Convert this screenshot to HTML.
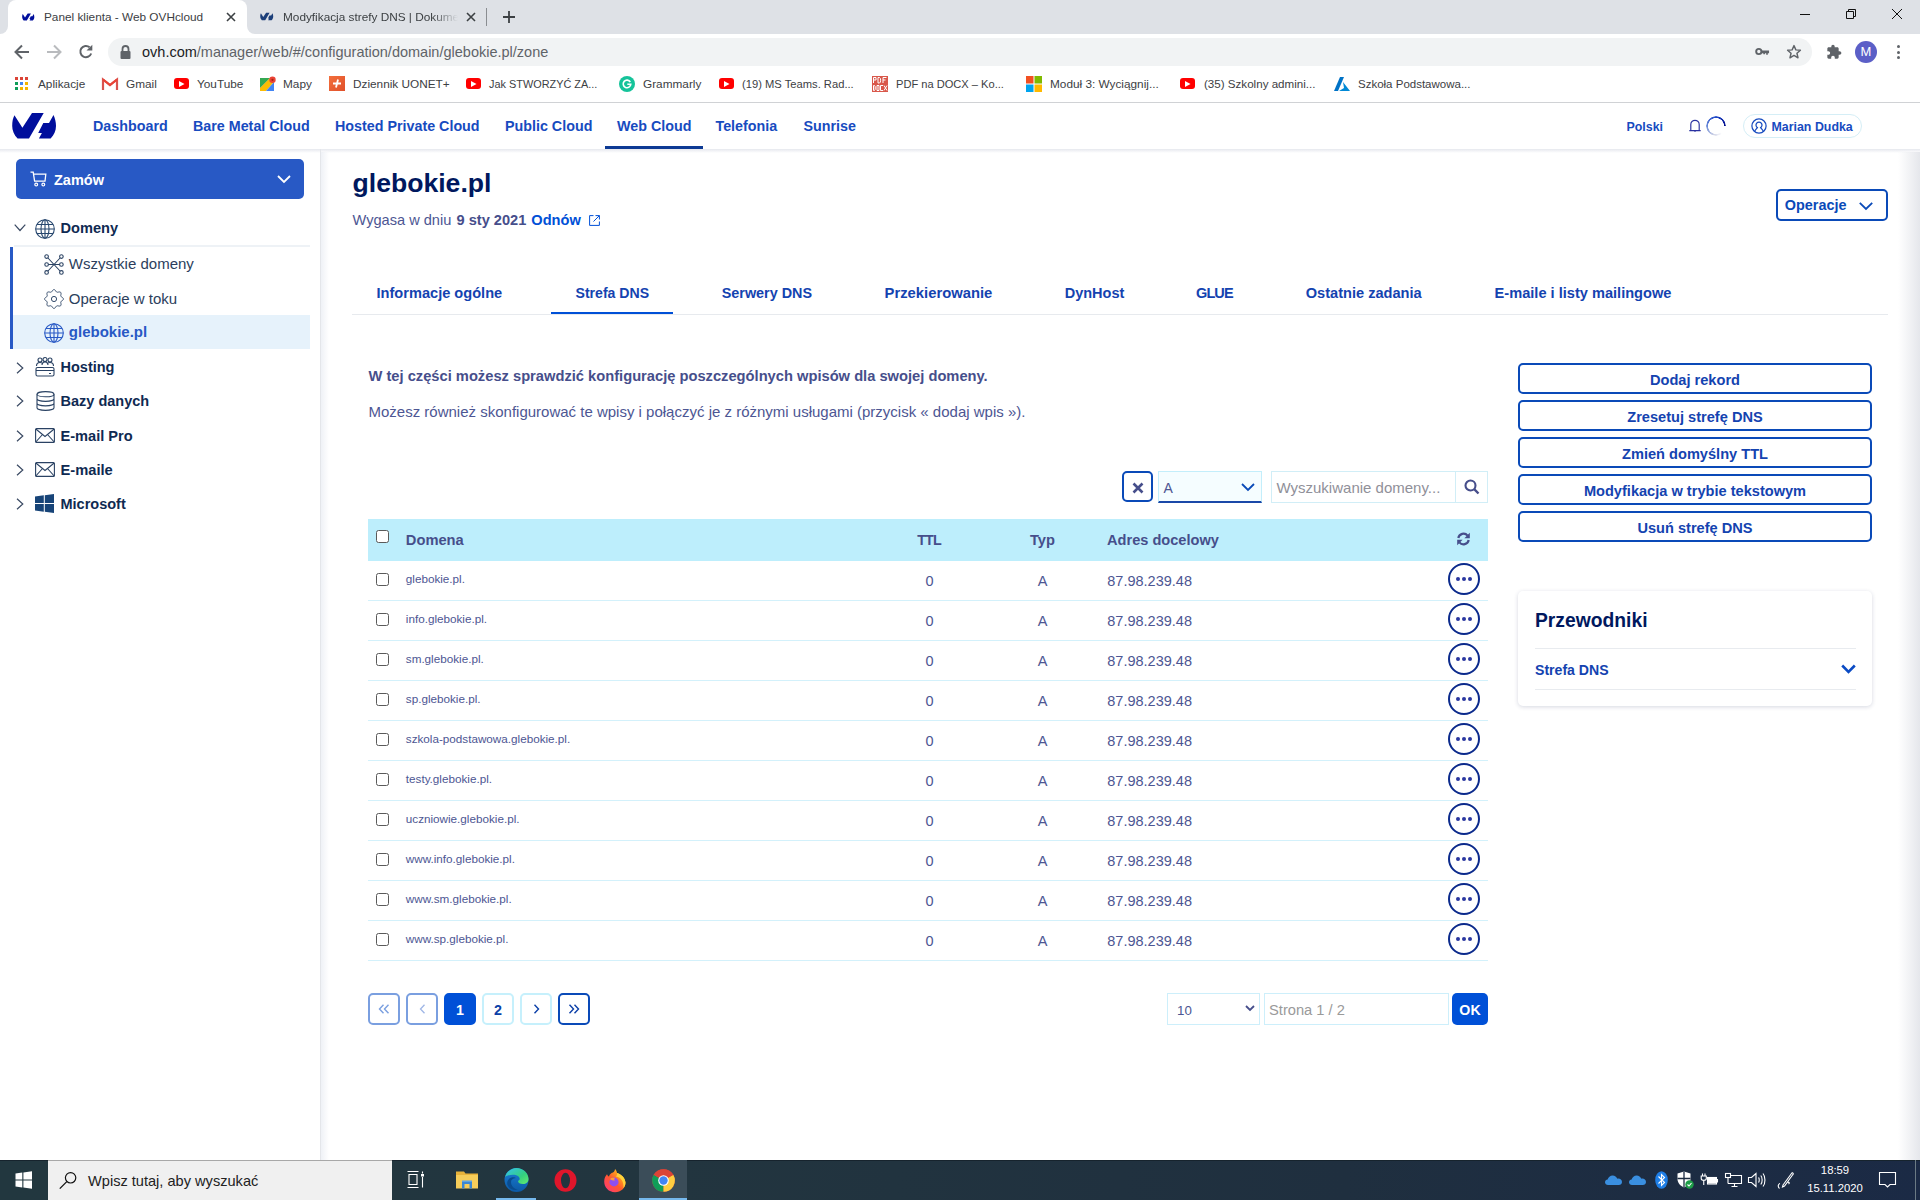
<!DOCTYPE html>
<html><head><meta charset="utf-8">
<style>
*{box-sizing:border-box;margin:0;padding:0}
html,body{width:1920px;height:1200px;overflow:hidden;background:#fff;font-family:"Liberation Sans",sans-serif}
.a{position:absolute}
.t{position:absolute;white-space:nowrap;line-height:20px}
.b{font-weight:bold}
svg{position:absolute;overflow:visible}
</style></head><body>
<!-- ============ BROWSER CHROME ============ -->
<div class="a" style="left:0;top:0;width:1920px;height:34px;background:#dee1e6"></div>
<!-- active tab -->
<div class="a" style="left:8px;top:0;width:239px;height:36px;background:#fff;border-radius:8px 8px 0 0"></div>
<div class="a" style="left:0;top:26px;width:8px;height:8px;background:#fff"></div>
<div class="a" style="left:0;top:26px;width:8px;height:8px;background:#dee1e6;border-bottom-right-radius:8px"></div>
<div class="a" style="left:247px;top:26px;width:8px;height:8px;background:#fff"></div>
<div class="a" style="left:247px;top:26px;width:8px;height:8px;background:#dee1e6;border-bottom-left-radius:8px"></div>
<svg style="left:21px;top:12px" width="15" height="10" viewBox="0 0 54 36"><path fill="#000e9c" d="M6.45,7.2 L14.4,19.8 L24,5.1 L35.7,5.1 L21,30.6 L9.6,30.6 C6,27 4.2,22 4.2,18 C4.2,13 5,10 6.45,7.2Z M45.5,7 C47,10 48,14 48,18 C48,23 46,27 42.6,30.6 L30.9,30.6 L33.9,25 L30.2,25 L35.3,15 L41,15Z"/></svg>
<div class="t" style="left:44px;top:7px;font-size:11.8px;color:#3c4043">Panel klienta - Web OVHcloud</div>
<svg style="left:226px;top:12px" width="10" height="10" viewBox="0 0 10 10"><path d="M1,1L9,9M9,1L1,9" stroke="#3c4043" stroke-width="1.6"/></svg>
<!-- inactive tab -->
<svg style="left:259px;top:11px" width="16" height="11" viewBox="0 0 54 36"><path fill="#1c3f7a" d="M6.45,7.2 L14.4,19.8 L24,5.1 L35.7,5.1 L21,30.6 L9.6,30.6 C6,27 4.2,22 4.2,18 C4.2,13 5,10 6.45,7.2Z M45.5,7 C47,10 48,14 48,18 C48,23 46,27 42.6,30.6 L30.9,30.6 L33.9,25 L30.2,25 L35.3,15 L41,15Z"/></svg>
<div class="t" style="left:283px;top:7px;font-size:11.8px;color:#3c4043;width:175px;overflow:hidden;-webkit-mask-image:linear-gradient(90deg,#000 85%,transparent)">Modyfikacja strefy DNS | Dokumentacja</div>
<svg style="left:466px;top:12px" width="10" height="10" viewBox="0 0 10 10"><path d="M1,1L9,9M9,1L1,9" stroke="#3c4043" stroke-width="1.6"/></svg>
<div class="a" style="left:486px;top:8px;width:1px;height:18px;background:#8a8d91"></div>
<svg style="left:502px;top:10px" width="14" height="14" viewBox="0 0 14 14"><path d="M7,1V13M1,7H13" stroke="#3c4043" stroke-width="1.8"/></svg>
<!-- window controls -->
<div class="a" style="left:1800px;top:14px;width:10px;height:1px;background:#111"></div>
<svg style="left:1846px;top:9px" width="10" height="10" viewBox="0 0 10 10"><path d="M0.5,2.5H7.5V9.5H0.5Z M2.5,2.5V0.5H9.5V7.5H7.5" fill="none" stroke="#111" stroke-width="1"/></svg>
<svg style="left:1892px;top:9px" width="10" height="10" viewBox="0 0 10 10"><path d="M0,0L10,10M10,0L0,10" stroke="#111" stroke-width="1"/></svg>
<!-- toolbar -->
<svg style="left:14px;top:44px" width="16" height="16" viewBox="0 0 16 16"><path d="M15,8H2M8,1.5L1.5,8L8,14.5" fill="none" stroke="#5f6368" stroke-width="2"/></svg>
<svg style="left:46px;top:44px" width="16" height="16" viewBox="0 0 16 16"><path d="M1,8H14M8,1.5L14.5,8L8,14.5" fill="none" stroke="#b9bbbe" stroke-width="2"/></svg>
<svg style="left:78px;top:44px" width="16" height="16" viewBox="0 0 16 16"><path d="M13.2,9.5A5.6,5.6 0 1 1 11.6,3.3" fill="none" stroke="#5f6368" stroke-width="2"/><path d="M14.3,0.8V6.6H8.5Z" fill="#5f6368"/></svg>
<div class="a" style="left:108px;top:38px;width:1704px;height:28px;background:#f1f3f4;border-radius:14px"></div>
<svg style="left:120px;top:45px" width="11" height="14" viewBox="0 0 11 14"><path d="M2.5,6V4A3,3 0 0 1 8.5,4V6" fill="none" stroke="#5f6368" stroke-width="1.8"/><rect x="0.5" y="6" width="10" height="8" rx="1" fill="#5f6368"/></svg>
<div class="t" style="left:142px;top:42px;font-size:14.5px;color:#5f6368"><span style="color:#202124">ovh.com</span>/manager/web/#/configuration/domain/glebokie.pl/zone</div>
<svg style="left:1755px;top:47px" width="15" height="9" viewBox="0 0 18 11"><circle cx="4.5" cy="5.5" r="3.2" fill="none" stroke="#5f6368" stroke-width="2.4"/><path d="M7.5,4.3H17V7.5H15.5V9.5H13.5V7.5H12V9H10V7.5H7.5Z" fill="#5f6368"/></svg>
<svg style="left:1786px;top:44px" width="16" height="16" viewBox="0 0 18 18"><path d="M9,1.8L11.1,6.6L16.2,7L12.3,10.4L13.5,15.5L9,12.8L4.5,15.5L5.7,10.4L1.8,7L6.9,6.6Z" fill="none" stroke="#5f6368" stroke-width="1.6" stroke-linejoin="round"/></svg>
<svg style="left:1826px;top:44px" width="16" height="16" viewBox="0 0 24 24"><path d="M20.5 11H19V7c0-1.1-.9-2-2-2h-4V3.5C13 2.12 11.88 1 10.5 1S8 2.12 8 3.5V5H4c-1.1 0-1.99.9-1.99 2v3.8H3.5c1.490 0 2.7 1.21 2.7 2.7s-1.21 2.7-2.7 2.7H2V20c0 1.1.9 2 2 2h3.8v-1.5c0-1.49 1.21-2.7 2.7-2.7 1.49 0 2.7 1.21 2.7 2.7V22H17c1.1 0 2-.9 2-2v-4h1.5c1.38 0 2.5-1.120 2.5-2.5S21.88 11 20.5 11z" fill="#5f6368"/></svg>
<div class="a" style="left:1855px;top:41px;width:22px;height:22px;border-radius:50%;background:#5b5fc7;color:#fff;font-size:13px;line-height:22px;text-align:center">M</div>
<div class="a" style="left:1896.5px;top:45px;width:3px;height:3px;border-radius:50%;background:#5f6368"></div>
<div class="a" style="left:1896.5px;top:50.5px;width:3px;height:3px;border-radius:50%;background:#5f6368"></div>
<div class="a" style="left:1896.5px;top:56px;width:3px;height:3px;border-radius:50%;background:#5f6368"></div>
<!-- bookmarks -->
<!-- apps grid -->
<svg style="left:15px;top:77px" width="13" height="13" viewBox="0 0 13 13">
<rect x="0" y="0" width="3" height="3" fill="#db4437"/><rect x="5" y="0" width="3" height="3" fill="#db4437"/><rect x="10" y="0" width="3" height="3" fill="#db4437"/>
<rect x="0" y="5" width="3" height="3" fill="#0f9d58"/><rect x="5" y="5" width="3" height="3" fill="#4285f4"/><rect x="10" y="5" width="3" height="3" fill="#f4b400"/>
<rect x="0" y="10" width="3" height="3" fill="#0f9d58"/><rect x="5" y="10" width="3" height="3" fill="#f4b400"/><rect x="10" y="10" width="3" height="3" fill="#f4b400"/></svg>
<div class="t" style="left:38px;top:74px;font-size:11.8px;color:#3c4043">Aplikacje</div>
<!-- gmail -->
<svg style="left:102px;top:78px" width="16" height="12" viewBox="0 0 16 12"><path d="M1,12V1.5L8,7L15,1.5V12" fill="none" stroke="#d9534f" stroke-width="2.2"/><path d="M1,1.5L8,7L15,1.5" fill="none" stroke="#ea4335" stroke-width="2"/></svg>
<div class="t" style="left:126px;top:74px;font-size:11.8px;color:#3c4043">Gmail</div>
<!-- youtube -->
<div class="a" style="left:174px;top:78px;width:15px;height:11px;background:#f00;border-radius:3px"></div>
<svg style="left:179px;top:80.5px" width="6" height="6" viewBox="0 0 6 6"><path d="M0,0L5.5,3L0,6Z" fill="#fff"/></svg>
<div class="t" style="left:197px;top:74px;font-size:11.8px;color:#3c4043">YouTube</div>
<!-- maps -->
<svg style="left:260px;top:76px" width="16" height="15" viewBox="0 0 16 15"><path d="M0,2L10,2L0,12Z" fill="#1a73e8"/><path d="M0,2H10L0,12Z" fill="#34a853"/><path d="M0,12L10,2L14,6L6,15H0Z" fill="#fbbc04"/><path d="M6,15L14,6V15Z" fill="#4285f4"/><circle cx="12.5" cy="3.8" r="3.2" fill="#ea4335"/><circle cx="12.5" cy="3.8" r="1.1" fill="#a52714"/></svg>
<div class="t" style="left:283px;top:74px;font-size:11.8px;color:#3c4043">Mapy</div>
<!-- dziennik -->
<div class="a" style="left:329px;top:76px;width:16px;height:15px;background:linear-gradient(135deg,#f36f3c,#e0502a)"></div>
<svg style="left:331px;top:78px" width="12" height="11" viewBox="0 0 12 11"><path d="M2,5.5H10M7,1.5L5,9.5" stroke="#fff" stroke-width="1.8"/></svg>
<div class="t" style="left:353px;top:74px;font-size:11.8px;color:#3c4043">Dziennik UONET+</div>
<!-- youtube 2 -->
<div class="a" style="left:466px;top:78px;width:15px;height:11px;background:#f00;border-radius:3px"></div>
<svg style="left:471px;top:80.5px" width="6" height="6" viewBox="0 0 6 6"><path d="M0,0L5.5,3L0,6Z" fill="#fff"/></svg>
<div class="t" style="left:489px;top:74px;font-size:10.9px;color:#3c4043">Jak STWORZYĆ ZA...</div>
<!-- grammarly -->
<div class="a" style="left:619px;top:76px;width:16px;height:16px;border-radius:50%;background:#15c39a"></div>
<svg style="left:622px;top:79px" width="10" height="10" viewBox="0 0 10 10"><path d="M8.3,3A3.8,3.8 0 1 0 8.8,5.2H5.3" fill="none" stroke="#fff" stroke-width="1.6"/></svg>
<div class="t" style="left:643px;top:74px;font-size:11.8px;color:#3c4043">Grammarly</div>
<!-- youtube 3 -->
<div class="a" style="left:719px;top:78px;width:15px;height:11px;background:#f00;border-radius:3px"></div>
<svg style="left:724px;top:80.5px" width="6" height="6" viewBox="0 0 6 6"><path d="M0,0L5.5,3L0,6Z" fill="#fff"/></svg>
<div class="t" style="left:742px;top:74px;font-size:11.2px;color:#3c4043">(19) MS Teams. Rad...</div>
<!-- pdf -->
<svg style="left:872px;top:76px" width="16" height="16" viewBox="0 0 16 16"><rect width="16" height="16" fill="#d9574a"/><g fill="none" stroke="#fff" stroke-width="1"><path d="M1.5,7V1.5H4V4H1.5M6,1.5H7.5C9,1.5 9,7 7.5,7H6ZM11,7V1.5H14.5M11,4H13.5"/><path d="M1.5,9.5H2.5C3.5,9.5 3.5,14.5 2.5,14.5H1.5Z M5,9.5H7V14.5H5Z M11,9.5H8.5V14.5H11 M12,9.5L15,14.5M15,9.5L12,14.5"/></g></svg>
<div class="t" style="left:896px;top:74px;font-size:11.1px;color:#3c4043">PDF na DOCX – Ko...</div>
<!-- microsoft -->
<svg style="left:1026px;top:76px" width="16" height="16" viewBox="0 0 16 16"><rect x="0" y="0" width="7.5" height="7.5" fill="#f25022"/><rect x="8.5" y="0" width="7.5" height="7.5" fill="#7fba00"/><rect x="0" y="8.5" width="7.5" height="7.5" fill="#00a4ef"/><rect x="8.5" y="8.5" width="7.5" height="7.5" fill="#ffb900"/></svg>
<div class="t" style="left:1050px;top:74px;font-size:11.8px;color:#3c4043">Moduł 3: Wyciągnij...</div>
<!-- youtube 4 -->
<div class="a" style="left:1180px;top:78px;width:15px;height:11px;background:#f00;border-radius:3px"></div>
<svg style="left:1185px;top:80.5px" width="6" height="6" viewBox="0 0 6 6"><path d="M0,0L5.5,3L0,6Z" fill="#fff"/></svg>
<div class="t" style="left:1204px;top:74px;font-size:11.6px;color:#3c4043">(35) Szkolny admini...</div>
<!-- azure -->
<svg style="left:1334px;top:77px" width="16" height="14" viewBox="0 0 16 14"><path d="M6,0H10L4,14H0Z" fill="#0072c6"/><path d="M9,5L16,14H5L10,11Z" fill="#0089d6"/></svg>
<div class="t" style="left:1358px;top:74px;font-size:11.5px;color:#3c4043">Szkoła Podstawowa...</div>

<div class="a" style="left:0;top:102px;width:1920px;height:1px;background:#d0d2d5"></div>

<!-- ============ OVH HEADER ============ -->
<div class="a" style="left:0;top:103px;width:1920px;height:46px;background:#fff"></div>
<div class="a" style="left:0;top:149px;width:1920px;height:4px;background:linear-gradient(#e6e8ee,rgba(240,242,246,0))"></div>
<svg style="left:8px;top:108px" width="54" height="36" viewBox="0 0 54 36"><path fill="#000e9c" d="M6.45,7.2 L14.4,19.8 L24,5.1 L35.7,5.1 L21,30.6 L9.6,30.6 C6,27 4.2,22 4.2,18 C4.2,13 5,10 6.45,7.2Z M45.5,7 C47,10 48,14 48,18 C48,23 46,27 42.6,30.6 L30.9,30.6 L33.9,25 L30.2,25 L35.3,15 L41,15Z"/></svg>
<div class="t b" style="left:93px;top:115.8px;font-size:14.3px;color:#174bbf">Dashboard</div>
<div class="t b" style="left:193px;top:115.8px;font-size:14.3px;color:#174bbf">Bare Metal Cloud</div>
<div class="t b" style="left:335px;top:115.8px;font-size:14.3px;color:#174bbf">Hosted Private Cloud</div>
<div class="t b" style="left:505px;top:115.8px;font-size:14.3px;color:#174bbf">Public Cloud</div>
<div class="t b" style="left:617px;top:115.8px;font-size:14.3px;color:#174bbf">Web Cloud</div>
<div class="a" style="left:605px;top:146px;width:98px;height:3px;background:#0d3a94"></div>
<div class="t b" style="left:715.5px;top:115.8px;font-size:14.3px;color:#174bbf">Telefonia</div>
<div class="t b" style="left:803.5px;top:115.8px;font-size:14.3px;color:#174bbf">Sunrise</div>
<div class="t b" style="left:1626.5px;top:116.7px;font-size:12.4px;color:#174bbf">Polski</div>
<svg style="left:1689px;top:119px" width="12" height="13" viewBox="0 0 12 13"><path d="M1.8,11.2V5.5A4.2,4.2 0 0 1 10.2,5.5V11.2M0.3,11.6H11.7" fill="none" stroke="#2a31a0" stroke-width="1.15"/><rect x="5.2" y="11.6" width="1.6" height="1" fill="#2a31a0"/></svg>
<div class="a" style="left:1706.2px;top:115.7px;width:20px;height:20px;border-radius:50%;background:conic-gradient(#1f48c8 0deg,#000a8a 90deg,rgba(255,255,255,0) 92deg,rgba(255,255,255,0) 140deg,rgba(170,176,210,0.55) 195deg,#6a8ad8 270deg,#1f48c8 360deg);-webkit-mask:radial-gradient(circle,transparent 7.8px,#000 8.1px,#000 9.8px,transparent 10.1px)"></div>
<div class="a" style="left:1743px;top:114px;width:119px;height:24px;border:1px solid #d5eef6;border-radius:12px"></div>
<svg style="left:1751px;top:118px" width="16" height="16" viewBox="0 0 16 16" fill="none" stroke="#174bbf" stroke-width="1.25"><circle cx="8" cy="8" r="7.1"/><path d="M3.6,13.4C4.3,11.8 5.6,10.8 6.4,9.6A3,3 0 1 1 9.6,9.6C10.4,10.8 11.7,11.8 12.4,13.4"/></svg>
<div class="t b" style="left:1771.5px;top:116.7px;font-size:12.4px;color:#174bbf">Marian Dudka</div>


<!-- ============ SIDEBAR ============ -->
<div class="a" style="left:320px;top:149px;width:1px;height:1011px;background:#e4e6ea"></div>
<div class="a" style="left:321px;top:152px;width:8px;height:1008px;background:linear-gradient(90deg,rgba(235,238,244,0.8),rgba(255,255,255,0))"></div>
<!-- Zamow -->
<div class="a" style="left:16px;top:159px;width:288px;height:40px;background:#2859c5;border-radius:5px"></div>
<svg style="left:30px;top:171px" width="17" height="16" viewBox="0 0 17 16"><path d="M0.5,1.2H3.2L4.6,10.2H15L15.8,3.2H3.6" fill="none" stroke="#fff" stroke-width="1.3"/><circle cx="6.2" cy="13.6" r="1.4" fill="none" stroke="#fff" stroke-width="1.2"/><circle cx="13.3" cy="13.6" r="1.4" fill="none" stroke="#fff" stroke-width="1.2"/></svg>
<div class="t b" style="left:54px;top:170px;font-size:14.5px;color:#fff">Zamów</div>
<svg style="left:277px;top:174.5px" width="14" height="9" viewBox="0 0 14 9"><path d="M1,1L7,7L13,1" fill="none" stroke="#fff" stroke-width="1.8"/></svg>
<!-- Domeny -->
<svg style="left:14px;top:224px" width="12" height="8" viewBox="0 0 12 8"><path d="M0.7,0.7L6,6.5L11.3,0.7" fill="none" stroke="#3a4a63" stroke-width="1.2"/></svg>
<svg style="left:35px;top:218.5px" width="20" height="20" viewBox="0 0 20 20" fill="none" stroke="#27476e" stroke-width="1.1"><circle cx="10" cy="10" r="9.3"/><ellipse cx="10" cy="10" rx="4" ry="9.3"/><path d="M10,0.7V19.3M0.7,10H19.3M2,5.5H18M2,14.5H18"/></svg>
<div class="t b" style="left:60.5px;top:218px;font-size:14.6px;color:#0f2a52">Domeny</div>
<div class="a" style="left:14px;top:245px;width:296px;height:2px;background:#eef2f6"></div>
<div class="a" style="left:10px;top:247px;width:3px;height:102px;background:#2859c5"></div>
<!-- Wszystkie domeny -->
<svg style="left:44px;top:254px" width="20" height="21" viewBox="0 0 20 21" fill="none" stroke="#2a4263" stroke-width="1.1"><path d="M3.5,3.5L16.5,17.5M16.5,3.5L3.5,17.5M3.5,10.5H16.5" /><circle cx="2.6" cy="2.6" r="1.8" fill="#fff"/><circle cx="17.4" cy="2.6" r="1.8" fill="#fff"/><circle cx="2.6" cy="10.5" r="1.8" fill="#fff"/><circle cx="17.4" cy="10.5" r="1.8" fill="#fff"/><circle cx="2.6" cy="18.4" r="1.8" fill="#fff"/><circle cx="17.4" cy="18.4" r="1.8" fill="#fff"/></svg>
<div class="t" style="left:68.8px;top:254px;font-size:15px;color:#2c3e5c">Wszystkie domeny</div>
<!-- Operacje w toku -->
<svg style="left:44px;top:289px" width="20" height="20" viewBox="0 0 20 20" fill="none" stroke="#2a4263" stroke-width="0.95"><path d="M10.00,0.60 L10.37,0.66 L10.72,0.82 L11.06,1.07 L11.36,1.40 L11.64,1.76 L11.89,2.13 L12.12,2.48 L12.35,2.78 L12.58,3.01 L12.83,3.16 L13.12,3.24 L13.45,3.24 L13.82,3.18 L14.23,3.10 L14.67,3.02 L15.12,2.95 L15.56,2.94 L15.98,3.00 L16.35,3.13 L16.65,3.35 L16.87,3.65 L17.00,4.02 L17.06,4.44 L17.05,4.88 L16.98,5.33 L16.90,5.77 L16.82,6.18 L16.76,6.55 L16.76,6.88 L16.84,7.17 L16.99,7.42 L17.22,7.65 L17.52,7.88 L17.87,8.11 L18.24,8.36 L18.60,8.64 L18.93,8.94 L19.18,9.28 L19.34,9.63 L19.40,10.00 L19.34,10.37 L19.18,10.72 L18.93,11.06 L18.60,11.36 L18.24,11.64 L17.87,11.89 L17.52,12.12 L17.22,12.35 L16.99,12.58 L16.84,12.83 L16.76,13.12 L16.76,13.45 L16.82,13.82 L16.90,14.23 L16.98,14.67 L17.05,15.12 L17.06,15.56 L17.00,15.98 L16.87,16.35 L16.65,16.65 L16.35,16.87 L15.98,17.00 L15.56,17.06 L15.12,17.05 L14.67,16.98 L14.23,16.90 L13.82,16.82 L13.45,16.76 L13.12,16.76 L12.83,16.84 L12.58,16.99 L12.35,17.22 L12.12,17.52 L11.89,17.87 L11.64,18.24 L11.36,18.60 L11.06,18.93 L10.72,19.18 L10.37,19.34 L10.00,19.40 L9.63,19.34 L9.28,19.18 L8.94,18.93 L8.64,18.60 L8.36,18.24 L8.11,17.87 L7.88,17.52 L7.65,17.22 L7.42,16.99 L7.17,16.84 L6.88,16.76 L6.55,16.76 L6.18,16.82 L5.77,16.90 L5.33,16.98 L4.88,17.05 L4.44,17.06 L4.02,17.00 L3.65,16.87 L3.35,16.65 L3.13,16.35 L3.00,15.98 L2.94,15.56 L2.95,15.12 L3.02,14.67 L3.10,14.23 L3.18,13.82 L3.24,13.45 L3.24,13.12 L3.16,12.83 L3.01,12.58 L2.78,12.35 L2.48,12.12 L2.13,11.89 L1.76,11.64 L1.40,11.36 L1.07,11.06 L0.82,10.72 L0.66,10.37 L0.60,10.00 L0.66,9.63 L0.82,9.28 L1.07,8.94 L1.40,8.64 L1.76,8.36 L2.13,8.11 L2.48,7.88 L2.78,7.65 L3.01,7.42 L3.16,7.17 L3.24,6.88 L3.24,6.55 L3.18,6.18 L3.10,5.77 L3.02,5.33 L2.95,4.88 L2.94,4.44 L3.00,4.02 L3.13,3.65 L3.35,3.35 L3.65,3.13 L4.02,3.00 L4.44,2.94 L4.88,2.95 L5.33,3.02 L5.77,3.10 L6.18,3.18 L6.55,3.24 L6.88,3.24 L7.17,3.16 L7.42,3.01 L7.65,2.78 L7.88,2.48 L8.11,2.13 L8.36,1.76 L8.64,1.40 L8.94,1.07 L9.28,0.82 L9.63,0.66Z" stroke-linejoin="round"/><circle cx="10" cy="10" r="2.6"/></svg>
<div class="t" style="left:68.8px;top:288.5px;font-size:15px;color:#2c3e5c">Operacje w toku</div>
<!-- glebokie.pl -->
<div class="a" style="left:13px;top:315px;width:297px;height:34px;background:#e6f2fb"></div>
<svg style="left:44px;top:323px" width="20" height="20" viewBox="0 0 20 20" fill="none" stroke="#2859c5" stroke-width="1.1"><circle cx="10" cy="10" r="9.3"/><ellipse cx="10" cy="10" rx="4" ry="9.3"/><path d="M10,0.7V19.3M0.7,10H19.3M2,5.5H18M2,14.5H18"/></svg>
<div class="t b" style="left:68.8px;top:322px;font-size:15px;color:#2859c5">glebokie.pl</div>
<!-- Hosting -->
<svg style="left:16px;top:362px" width="8" height="12" viewBox="0 0 8 12"><path d="M1,0.7L6.8,6L1,11.3" fill="none" stroke="#3a4a63" stroke-width="1.2"/></svg>
<svg style="left:35px;top:357px" width="20" height="20" viewBox="0 0 20 20" fill="none" stroke="#2a4263" stroke-width="1.1"><circle cx="5" cy="3" r="2"/><circle cx="10" cy="2.5" r="2"/><circle cx="15" cy="3" r="2"/><path d="M1.5,9C1.5,6.5 3,5.5 5,5.5C6.5,5.5 7.5,6 8,7M12,7C12.5,6 13.5,5.5 15,5.5C17,5.5 18.5,6.5 18.5,9M7,8C7,6 8.5,5 10,5C11.5,5 13,6 13,8"/><rect x="1" y="10.5" width="18" height="8.5" rx="1.5"/><path d="M1,13.5H19M14,16.5H16"/></svg>
<div class="t b" style="left:60.5px;top:357px;font-size:14.5px;color:#0f2a52">Hosting</div>
<!-- Bazy danych -->
<svg style="left:16px;top:395px" width="8" height="12" viewBox="0 0 8 12"><path d="M1,0.7L6.8,6L1,11.3" fill="none" stroke="#3a4a63" stroke-width="1.2"/></svg>
<svg style="left:36px;top:391px" width="19" height="20" viewBox="0 0 19 20" fill="none" stroke="#2a4263" stroke-width="1.1"><ellipse cx="9.5" cy="3.2" rx="8.5" ry="2.6"/><path d="M1,3.2V16.8C1,18.2 4.8,19.4 9.5,19.4C14.2,19.4 18,18.2 18,16.8V3.2M1,7.8C1,9.2 4.8,10.4 9.5,10.4C14.2,10.4 18,9.2 18,7.8M1,12.3C1,13.7 4.8,14.9 9.5,14.9C14.2,14.9 18,13.7 18,12.3"/></svg>
<div class="t b" style="left:60.5px;top:391px;font-size:14.5px;color:#0f2a52">Bazy danych</div>
<!-- E-mail Pro -->
<svg style="left:16px;top:430px" width="8" height="12" viewBox="0 0 8 12"><path d="M1,0.7L6.8,6L1,11.3" fill="none" stroke="#3a4a63" stroke-width="1.2"/></svg>
<svg style="left:35px;top:428px" width="20" height="15" viewBox="0 0 20 15" fill="none" stroke="#2a4263" stroke-width="1.1"><rect x="0.6" y="0.6" width="18.8" height="13.8" rx="1"/><path d="M0.8,1L10,8.5L19.2,1M0.8,14L7.5,6.5M19.2,14L12.5,6.5"/></svg>
<div class="t b" style="left:60.5px;top:426px;font-size:14.6px;color:#0f2a52">E-mail Pro</div>
<!-- E-maile -->
<svg style="left:16px;top:464px" width="8" height="12" viewBox="0 0 8 12"><path d="M1,0.7L6.8,6L1,11.3" fill="none" stroke="#3a4a63" stroke-width="1.2"/></svg>
<svg style="left:35px;top:462px" width="20" height="15" viewBox="0 0 20 15" fill="none" stroke="#2a4263" stroke-width="1.1"><rect x="0.6" y="0.6" width="18.8" height="13.8" rx="1"/><path d="M0.8,1L10,8.5L19.2,1M0.8,14L7.5,6.5M19.2,14L12.5,6.5"/></svg>
<div class="t b" style="left:60.5px;top:460px;font-size:14.7px;color:#0f2a52">E-maile</div>
<!-- Microsoft -->
<svg style="left:16px;top:498px" width="8" height="12" viewBox="0 0 8 12"><path d="M1,0.7L6.8,6L1,11.3" fill="none" stroke="#3a4a63" stroke-width="1.2"/></svg>
<svg style="left:35px;top:494px" width="19" height="19" viewBox="0 0 19 19" fill="#174478"><path d="M0,2.6L8.8,1.3V9H0Z M9.8,1.2L19,0V9H9.8Z M0,10H8.8V17.7L0,16.4Z M9.8,10H19V19L9.8,17.8Z"/></svg>
<div class="t b" style="left:60.5px;top:494px;font-size:14.5px;color:#0f2a52">Microsoft</div>


<!-- ============ CONTENT ============ -->
<div class="a" style="left:1898px;top:152px;width:22px;height:1008px;background:linear-gradient(90deg,rgba(232,234,238,0),rgba(226,228,233,0.9))"></div>
<div class="t b" style="left:352.5px;top:165.5px;line-height:34px;font-size:26.6px;color:#00185e">glebokie.pl</div>
<div class="t" style="left:352.5px;top:210.3px;font-size:14.6px;color:#4d5693">Wygasa w dniu <b style="position:absolute;left:104px;color:#464e8b">9&nbsp;sty&nbsp;2021</b><b style="position:absolute;left:178.8px;color:#0050d7">Odnów</b></div>
<svg style="left:589px;top:215px" width="11" height="11" viewBox="0 0 11 11" fill="none" stroke="#0050d7" stroke-width="1"><path d="M4.5,0.6H0.6V10.4H10.4V6.5M6.5,0.6H10.4V4.5M10.4,0.6L4.5,6.5"/></svg>
<div class="a" style="left:1776px;top:189px;width:112px;height:32px;border:2px solid #0a4ab8;border-radius:5px"></div>
<div class="t b" style="left:1784.8px;top:195.4px;font-size:14.4px;color:#0a4ab8">Operacje</div>
<svg style="left:1859px;top:202px" width="14" height="8" viewBox="0 0 14 8"><path d="M0.8,0.8L7,7L13.2,0.8" fill="none" stroke="#0a4ab8" stroke-width="1.8"/></svg>
<div class="t b" style="left:376.5px;top:282.5px;font-size:14.6px;color:#1443b0">Informacje ogólne</div>
<div class="t b" style="left:575.5px;top:282.5px;font-size:14.1px;color:#1443b0">Strefa DNS</div>
<div class="t b" style="left:721.7px;top:282.5px;font-size:14.4px;color:#1443b0">Serwery DNS</div>
<div class="t b" style="left:884.6px;top:282.5px;font-size:14.8px;color:#1443b0">Przekierowanie</div>
<div class="t b" style="left:1064.7px;top:282.5px;font-size:14.5px;color:#1443b0">DynHost</div>
<div class="t b" style="left:1196px;top:282.5px;font-size:14.5px;letter-spacing:-0.9px;color:#1443b0">GLUE</div>
<div class="t b" style="left:1305.7px;top:282.5px;font-size:14.6px;color:#1443b0">Ostatnie zadania</div>
<div class="t b" style="left:1494.6px;top:282.5px;font-size:14.6px;color:#1443b0">E-maile i listy mailingowe</div>
<div class="a" style="left:352px;top:314px;width:1536px;height:1px;background:#e7eaee"></div>
<div class="a" style="left:551px;top:311.7px;width:122px;height:2.4px;background:#0050d7"></div>
<div class="t b" style="left:368.5px;top:365.6px;font-size:14.7px;color:#464e8b">W tej części możesz sprawdzić konfigurację poszczególnych wpisów dla swojej domeny.</div>
<div class="t" style="left:368.5px;top:401.5px;font-size:15px;color:#4d5693">Możesz również skonfigurować te wpisy i połączyć je z różnymi usługami (przycisk « dodaj wpis »).</div>
<div class="a" style="left:1518px;top:363px;width:354px;height:31px;border:2px solid #0a4ab8;border-radius:5px"></div>
<div class="t b" style="left:1518px;width:354px;text-align:center;top:369.8px;font-size:14.6px;color:#1443b0">Dodaj rekord</div>
<div class="a" style="left:1518px;top:400px;width:354px;height:31px;border:2px solid #0a4ab8;border-radius:5px"></div>
<div class="t b" style="left:1518px;width:354px;text-align:center;top:406.8px;font-size:14.6px;color:#1443b0">Zresetuj strefę DNS</div>
<div class="a" style="left:1518px;top:437px;width:354px;height:31px;border:2px solid #0a4ab8;border-radius:5px"></div>
<div class="t b" style="left:1518px;width:354px;text-align:center;top:443.8px;font-size:14.6px;color:#1443b0">Zmień domyślny TTL</div>
<div class="a" style="left:1518px;top:474px;width:354px;height:31px;border:2px solid #0a4ab8;border-radius:5px"></div>
<div class="t b" style="left:1518px;width:354px;text-align:center;top:480.8px;font-size:14.6px;color:#1443b0">Modyfikacja w trybie tekstowym</div>
<div class="a" style="left:1518px;top:511px;width:354px;height:31px;border:2px solid #0a4ab8;border-radius:5px"></div>
<div class="t b" style="left:1518px;width:354px;text-align:center;top:517.8px;font-size:14.6px;color:#1443b0">Usuń strefę DNS</div>
<div class="a" style="left:1518px;top:591px;width:354px;height:115px;background:#fff;border-radius:5px;box-shadow:0 1px 4px rgba(30,40,90,0.18)"></div>
<div class="t b" style="left:1535px;top:609.3px;line-height:24px;font-size:19.3px;color:#00185e">Przewodniki</div>
<div class="a" style="left:1535px;top:648px;width:321px;height:1px;background:#e8ebef"></div>
<div class="t b" style="left:1535px;top:660px;font-size:14.1px;color:#1443b0">Strefa DNS</div>
<svg style="left:1841px;top:664px" width="15" height="10" viewBox="0 0 15 10"><path d="M1.2,1.5L7.5,7.8L13.8,1.5" fill="none" stroke="#0b4bc4" stroke-width="2.6"/></svg>
<div class="a" style="left:1535px;top:689px;width:321px;height:1px;background:#e8ebef"></div>
<div class="a" style="left:1121.5px;top:471.3px;width:31px;height:31px;border:2px solid #0a4ab8;border-radius:5px"></div>
<svg style="left:1131.5px;top:482px" width="12" height="12" viewBox="0 0 12 12"><path d="M1.5,1.5L10.5,10.5M10.5,1.5L1.5,10.5" stroke="#464e8b" stroke-width="2.6"/></svg>
<div class="a" style="left:1158px;top:471.3px;width:104px;height:31.5px;background:#f5fdff;border:1px solid #c3eefb;border-bottom:2px solid #1a48a8"></div>
<div class="t" style="left:1163.5px;top:477.5px;font-size:14px;color:#4d5693">A</div>
<svg style="left:1241px;top:483px" width="14" height="9" viewBox="0 0 14 9"><path d="M1,1L7,7L13,1" fill="none" stroke="#0a4ab8" stroke-width="1.8"/></svg>
<div class="a" style="left:1271px;top:471.3px;width:217px;height:31.5px;border:1px solid #d1eef7"></div>
<div class="a" style="left:1455px;top:471.3px;width:1px;height:31.5px;background:#d1eef7"></div>
<div class="t" style="left:1276.5px;top:478px;font-size:15px;color:#909099">Wyszukiwanie domeny...</div>
<svg style="left:1464px;top:479px" width="16" height="16" viewBox="0 0 16 16"><circle cx="6.5" cy="6.5" r="5" fill="none" stroke="#464e8b" stroke-width="2.1"/><path d="M10.2,10.2L14.5,14.5" stroke="#464e8b" stroke-width="2.4"/></svg>
<div class="a" style="left:368px;top:519px;width:1120px;height:41.5px;background:#bdeefc"></div>
<div class="a" style="left:376px;top:530px;width:13px;height:13px;border:1px solid #5a5a5a;border-radius:2.5px;background:#fff"></div>
<div class="t b" style="left:405.8px;top:529.5px;font-size:14.7px;color:#464e8b">Domena</div>
<div class="t b" style="left:889px;width:80px;text-align:center;top:529.5px;font-size:14.3px;letter-spacing:-0.9px;color:#464e8b">TTL</div>
<div class="t b" style="left:1002.5px;width:80px;text-align:center;top:529.5px;font-size:14.7px;color:#464e8b">Typ</div>
<div class="t b" style="left:1107px;top:529.5px;font-size:14.6px;color:#464e8b">Adres docelowy</div>
<svg style="left:1456px;top:532px" width="15" height="14" viewBox="0 0 15 14"><path d="M2.3,6A5.3,5.3 0 0 1 11.6,3.6" fill="none" stroke="#464e8b" stroke-width="2.2"/><path d="M13.8,0.8V6.2H8.4Z" fill="#464e8b"/><path d="M12.7,8A5.3,5.3 0 0 1 3.4,10.4" fill="none" stroke="#464e8b" stroke-width="2.2"/><path d="M1.2,13.2V7.8H6.6Z" fill="#464e8b"/></svg>
<div class="a" style="left:376px;top:573px;width:13px;height:13px;border:1px solid #5a5a5a;border-radius:2.5px;background:#fff"></div>
<div class="t" style="left:405.8px;top:569.2px;font-size:11.7px;color:#4d5693">glebokie.pl.</div>
<div class="t" style="left:889.5px;width:80px;text-align:center;top:570.8px;font-size:14.5px;color:#4d5693">0</div>
<div class="t" style="left:1002.5px;width:80px;text-align:center;top:570.8px;font-size:14.5px;color:#4d5693">A</div>
<div class="t" style="left:1107.3px;top:570.8px;font-size:14.5px;color:#4d5693">87.98.239.48</div>
<div class="a" style="left:1448px;top:563px;width:32px;height:32px;border:2px solid #0b2a8c;border-radius:50%"></div>
<div class="a" style="left:1456.1px;top:576.9px;width:4px;height:4px;border-radius:50%;background:#2a37a0"></div>
<div class="a" style="left:1462px;top:576.9px;width:4px;height:4px;border-radius:50%;background:#2a37a0"></div>
<div class="a" style="left:1468px;top:576.9px;width:4px;height:4px;border-radius:50%;background:#2a37a0"></div>
<div class="a" style="left:368px;top:600px;width:1120px;height:1px;background:#d3f1fb"></div>
<div class="a" style="left:376px;top:613px;width:13px;height:13px;border:1px solid #5a5a5a;border-radius:2.5px;background:#fff"></div>
<div class="t" style="left:405.8px;top:609.2px;font-size:11.7px;color:#4d5693">info.glebokie.pl.</div>
<div class="t" style="left:889.5px;width:80px;text-align:center;top:610.8px;font-size:14.5px;color:#4d5693">0</div>
<div class="t" style="left:1002.5px;width:80px;text-align:center;top:610.8px;font-size:14.5px;color:#4d5693">A</div>
<div class="t" style="left:1107.3px;top:610.8px;font-size:14.5px;color:#4d5693">87.98.239.48</div>
<div class="a" style="left:1448px;top:603px;width:32px;height:32px;border:2px solid #0b2a8c;border-radius:50%"></div>
<div class="a" style="left:1456.1px;top:616.9px;width:4px;height:4px;border-radius:50%;background:#2a37a0"></div>
<div class="a" style="left:1462px;top:616.9px;width:4px;height:4px;border-radius:50%;background:#2a37a0"></div>
<div class="a" style="left:1468px;top:616.9px;width:4px;height:4px;border-radius:50%;background:#2a37a0"></div>
<div class="a" style="left:368px;top:640px;width:1120px;height:1px;background:#d3f1fb"></div>
<div class="a" style="left:376px;top:653px;width:13px;height:13px;border:1px solid #5a5a5a;border-radius:2.5px;background:#fff"></div>
<div class="t" style="left:405.8px;top:649.2px;font-size:11.7px;color:#4d5693">sm.glebokie.pl.</div>
<div class="t" style="left:889.5px;width:80px;text-align:center;top:650.8px;font-size:14.5px;color:#4d5693">0</div>
<div class="t" style="left:1002.5px;width:80px;text-align:center;top:650.8px;font-size:14.5px;color:#4d5693">A</div>
<div class="t" style="left:1107.3px;top:650.8px;font-size:14.5px;color:#4d5693">87.98.239.48</div>
<div class="a" style="left:1448px;top:643px;width:32px;height:32px;border:2px solid #0b2a8c;border-radius:50%"></div>
<div class="a" style="left:1456.1px;top:656.9px;width:4px;height:4px;border-radius:50%;background:#2a37a0"></div>
<div class="a" style="left:1462px;top:656.9px;width:4px;height:4px;border-radius:50%;background:#2a37a0"></div>
<div class="a" style="left:1468px;top:656.9px;width:4px;height:4px;border-radius:50%;background:#2a37a0"></div>
<div class="a" style="left:368px;top:680px;width:1120px;height:1px;background:#d3f1fb"></div>
<div class="a" style="left:376px;top:693px;width:13px;height:13px;border:1px solid #5a5a5a;border-radius:2.5px;background:#fff"></div>
<div class="t" style="left:405.8px;top:689.2px;font-size:11.7px;color:#4d5693">sp.glebokie.pl.</div>
<div class="t" style="left:889.5px;width:80px;text-align:center;top:690.8px;font-size:14.5px;color:#4d5693">0</div>
<div class="t" style="left:1002.5px;width:80px;text-align:center;top:690.8px;font-size:14.5px;color:#4d5693">A</div>
<div class="t" style="left:1107.3px;top:690.8px;font-size:14.5px;color:#4d5693">87.98.239.48</div>
<div class="a" style="left:1448px;top:683px;width:32px;height:32px;border:2px solid #0b2a8c;border-radius:50%"></div>
<div class="a" style="left:1456.1px;top:696.9px;width:4px;height:4px;border-radius:50%;background:#2a37a0"></div>
<div class="a" style="left:1462px;top:696.9px;width:4px;height:4px;border-radius:50%;background:#2a37a0"></div>
<div class="a" style="left:1468px;top:696.9px;width:4px;height:4px;border-radius:50%;background:#2a37a0"></div>
<div class="a" style="left:368px;top:720px;width:1120px;height:1px;background:#d3f1fb"></div>
<div class="a" style="left:376px;top:733px;width:13px;height:13px;border:1px solid #5a5a5a;border-radius:2.5px;background:#fff"></div>
<div class="t" style="left:405.8px;top:729.2px;font-size:11.7px;color:#4d5693">szkola-podstawowa.glebokie.pl.</div>
<div class="t" style="left:889.5px;width:80px;text-align:center;top:730.8px;font-size:14.5px;color:#4d5693">0</div>
<div class="t" style="left:1002.5px;width:80px;text-align:center;top:730.8px;font-size:14.5px;color:#4d5693">A</div>
<div class="t" style="left:1107.3px;top:730.8px;font-size:14.5px;color:#4d5693">87.98.239.48</div>
<div class="a" style="left:1448px;top:723px;width:32px;height:32px;border:2px solid #0b2a8c;border-radius:50%"></div>
<div class="a" style="left:1456.1px;top:736.9px;width:4px;height:4px;border-radius:50%;background:#2a37a0"></div>
<div class="a" style="left:1462px;top:736.9px;width:4px;height:4px;border-radius:50%;background:#2a37a0"></div>
<div class="a" style="left:1468px;top:736.9px;width:4px;height:4px;border-radius:50%;background:#2a37a0"></div>
<div class="a" style="left:368px;top:760px;width:1120px;height:1px;background:#d3f1fb"></div>
<div class="a" style="left:376px;top:773px;width:13px;height:13px;border:1px solid #5a5a5a;border-radius:2.5px;background:#fff"></div>
<div class="t" style="left:405.8px;top:769.2px;font-size:11.7px;color:#4d5693">testy.glebokie.pl.</div>
<div class="t" style="left:889.5px;width:80px;text-align:center;top:770.8px;font-size:14.5px;color:#4d5693">0</div>
<div class="t" style="left:1002.5px;width:80px;text-align:center;top:770.8px;font-size:14.5px;color:#4d5693">A</div>
<div class="t" style="left:1107.3px;top:770.8px;font-size:14.5px;color:#4d5693">87.98.239.48</div>
<div class="a" style="left:1448px;top:763px;width:32px;height:32px;border:2px solid #0b2a8c;border-radius:50%"></div>
<div class="a" style="left:1456.1px;top:776.9px;width:4px;height:4px;border-radius:50%;background:#2a37a0"></div>
<div class="a" style="left:1462px;top:776.9px;width:4px;height:4px;border-radius:50%;background:#2a37a0"></div>
<div class="a" style="left:1468px;top:776.9px;width:4px;height:4px;border-radius:50%;background:#2a37a0"></div>
<div class="a" style="left:368px;top:800px;width:1120px;height:1px;background:#d3f1fb"></div>
<div class="a" style="left:376px;top:813px;width:13px;height:13px;border:1px solid #5a5a5a;border-radius:2.5px;background:#fff"></div>
<div class="t" style="left:405.8px;top:809.2px;font-size:11.7px;color:#4d5693">uczniowie.glebokie.pl.</div>
<div class="t" style="left:889.5px;width:80px;text-align:center;top:810.8px;font-size:14.5px;color:#4d5693">0</div>
<div class="t" style="left:1002.5px;width:80px;text-align:center;top:810.8px;font-size:14.5px;color:#4d5693">A</div>
<div class="t" style="left:1107.3px;top:810.8px;font-size:14.5px;color:#4d5693">87.98.239.48</div>
<div class="a" style="left:1448px;top:803px;width:32px;height:32px;border:2px solid #0b2a8c;border-radius:50%"></div>
<div class="a" style="left:1456.1px;top:816.9px;width:4px;height:4px;border-radius:50%;background:#2a37a0"></div>
<div class="a" style="left:1462px;top:816.9px;width:4px;height:4px;border-radius:50%;background:#2a37a0"></div>
<div class="a" style="left:1468px;top:816.9px;width:4px;height:4px;border-radius:50%;background:#2a37a0"></div>
<div class="a" style="left:368px;top:840px;width:1120px;height:1px;background:#d3f1fb"></div>
<div class="a" style="left:376px;top:853px;width:13px;height:13px;border:1px solid #5a5a5a;border-radius:2.5px;background:#fff"></div>
<div class="t" style="left:405.8px;top:849.2px;font-size:11.7px;color:#4d5693">www.info.glebokie.pl.</div>
<div class="t" style="left:889.5px;width:80px;text-align:center;top:850.8px;font-size:14.5px;color:#4d5693">0</div>
<div class="t" style="left:1002.5px;width:80px;text-align:center;top:850.8px;font-size:14.5px;color:#4d5693">A</div>
<div class="t" style="left:1107.3px;top:850.8px;font-size:14.5px;color:#4d5693">87.98.239.48</div>
<div class="a" style="left:1448px;top:843px;width:32px;height:32px;border:2px solid #0b2a8c;border-radius:50%"></div>
<div class="a" style="left:1456.1px;top:856.9px;width:4px;height:4px;border-radius:50%;background:#2a37a0"></div>
<div class="a" style="left:1462px;top:856.9px;width:4px;height:4px;border-radius:50%;background:#2a37a0"></div>
<div class="a" style="left:1468px;top:856.9px;width:4px;height:4px;border-radius:50%;background:#2a37a0"></div>
<div class="a" style="left:368px;top:880px;width:1120px;height:1px;background:#d3f1fb"></div>
<div class="a" style="left:376px;top:893px;width:13px;height:13px;border:1px solid #5a5a5a;border-radius:2.5px;background:#fff"></div>
<div class="t" style="left:405.8px;top:889.2px;font-size:11.7px;color:#4d5693">www.sm.glebokie.pl.</div>
<div class="t" style="left:889.5px;width:80px;text-align:center;top:890.8px;font-size:14.5px;color:#4d5693">0</div>
<div class="t" style="left:1002.5px;width:80px;text-align:center;top:890.8px;font-size:14.5px;color:#4d5693">A</div>
<div class="t" style="left:1107.3px;top:890.8px;font-size:14.5px;color:#4d5693">87.98.239.48</div>
<div class="a" style="left:1448px;top:883px;width:32px;height:32px;border:2px solid #0b2a8c;border-radius:50%"></div>
<div class="a" style="left:1456.1px;top:896.9px;width:4px;height:4px;border-radius:50%;background:#2a37a0"></div>
<div class="a" style="left:1462px;top:896.9px;width:4px;height:4px;border-radius:50%;background:#2a37a0"></div>
<div class="a" style="left:1468px;top:896.9px;width:4px;height:4px;border-radius:50%;background:#2a37a0"></div>
<div class="a" style="left:368px;top:920px;width:1120px;height:1px;background:#d3f1fb"></div>
<div class="a" style="left:376px;top:933px;width:13px;height:13px;border:1px solid #5a5a5a;border-radius:2.5px;background:#fff"></div>
<div class="t" style="left:405.8px;top:929.2px;font-size:11.7px;color:#4d5693">www.sp.glebokie.pl.</div>
<div class="t" style="left:889.5px;width:80px;text-align:center;top:930.8px;font-size:14.5px;color:#4d5693">0</div>
<div class="t" style="left:1002.5px;width:80px;text-align:center;top:930.8px;font-size:14.5px;color:#4d5693">A</div>
<div class="t" style="left:1107.3px;top:930.8px;font-size:14.5px;color:#4d5693">87.98.239.48</div>
<div class="a" style="left:1448px;top:923px;width:32px;height:32px;border:2px solid #0b2a8c;border-radius:50%"></div>
<div class="a" style="left:1456.1px;top:936.9px;width:4px;height:4px;border-radius:50%;background:#2a37a0"></div>
<div class="a" style="left:1462px;top:936.9px;width:4px;height:4px;border-radius:50%;background:#2a37a0"></div>
<div class="a" style="left:1468px;top:936.9px;width:4px;height:4px;border-radius:50%;background:#2a37a0"></div>
<div class="a" style="left:368px;top:960px;width:1120px;height:1px;background:#d3f1fb"></div>
<div class="a" style="left:368px;top:993px;width:32px;height:32px;border:2px solid #7a9fe0;border-radius:5px;background:#fff"></div><svg style="left:378px;top:1004px" width="12" height="10" viewBox="0 0 12 10"><path d="M5.5,0.8L1.5,5L5.5,9.2M10.5,0.8L6.5,5L10.5,9.2" fill="none" stroke="#7a9fe0" stroke-width="1.4"/></svg>
<div class="a" style="left:406px;top:993px;width:32px;height:32px;border:2px solid #7a9fe0;border-radius:5px;background:#fff"></div><svg style="left:419px;top:1004px" width="7" height="10" viewBox="0 0 7 10"><path d="M5.5,0.8L1.5,5L5.5,9.2" fill="none" stroke="#9fb6e6" stroke-width="1.3"/></svg>
<div class="a" style="left:444px;top:993px;width:32px;height:32px;border:2px solid #0050d7;border-radius:5px;background:#0050d7"></div><div class="t b" style="left:444px;width:32px;text-align:center;top:1000.3px;font-size:14.3px;color:#fff">1</div>
<div class="a" style="left:482px;top:993px;width:32px;height:32px;border:2px solid #c6f0fc;border-radius:5px;background:#fff"></div><div class="t b" style="left:482px;width:32px;text-align:center;top:1000.3px;font-size:14.3px;color:#0b3fa8">2</div>
<div class="a" style="left:520px;top:993px;width:32px;height:32px;border:2px solid #c6f0fc;border-radius:5px;background:#fff"></div><svg style="left:533px;top:1004px" width="7" height="10" viewBox="0 0 7 10"><path d="M1.5,0.8L5.5,5L1.5,9.2" fill="none" stroke="#0b3fa8" stroke-width="1.4"/></svg>
<div class="a" style="left:558px;top:993px;width:32px;height:32px;border:2px solid #0a4ab8;border-radius:5px;background:#fff"></div><svg style="left:568px;top:1004px" width="12" height="10" viewBox="0 0 12 10"><path d="M1.5,0.8L5.5,5L1.5,9.2M6.5,0.8L10.5,5L6.5,9.2" fill="none" stroke="#0b3fa8" stroke-width="1.4"/></svg>
<div class="a" style="left:1167px;top:993px;width:93px;height:32px;border:1px solid #cdeffb"></div>
<div class="t" style="left:1177px;top:1001px;font-size:13.3px;color:#4d5693">10</div>
<svg style="left:1245px;top:1005px" width="10" height="7" viewBox="0 0 10 7"><path d="M1,1L5,5L9,1" fill="none" stroke="#464e8b" stroke-width="1.8"/></svg>
<div class="a" style="left:1264px;top:993px;width:185px;height:32px;border:1px solid #cdeffb"></div>
<div class="t" style="left:1269px;top:999.8px;font-size:14.7px;color:#9a9a9a">Strona 1 / 2</div>
<div class="a" style="left:1452px;top:993px;width:36px;height:32px;background:#0050d7;border-radius:5px"></div>
<div class="t b" style="left:1452px;width:36px;text-align:center;top:1000px;font-size:14.2px;color:#fff">OK</div>
<!-- ============ TASKBAR ============ -->
<div class="a" style="left:0;top:1160px;width:1920px;height:40px;background:linear-gradient(90deg,#22373f 0%,#22353f 35%,#1f2f3f 70%,#1b2a45 100%);border-top:1px solid #16232d"></div>
<svg style="left:15px;top:1171px" width="18" height="18" viewBox="0 0 18 18" fill="#fff"><path d="M0.5,2.6L7.3,1.6V8.4H0.5Z M8.4,1.4L17,0.2V8.4H8.4Z M0.5,9.5H7.3V16.4L0.5,15.4Z M8.4,9.5H17V17.8L8.4,16.6Z"/></svg>
<div class="a" style="left:48px;top:1160px;width:344px;height:40px;background:#f0f0f0;border-top:1px solid #a8a8a8"></div>
<svg style="left:59px;top:1171px" width="19" height="19" viewBox="0 0 19 19"><circle cx="11.6" cy="6.8" r="5.2" fill="none" stroke="#111" stroke-width="1.2"/><path d="M7.8,10.6L0.8,17.6" stroke="#111" stroke-width="1.3"/></svg>
<div class="t" style="left:88px;top:1170.5px;font-size:14.6px;color:#222">Wpisz tutaj, aby wyszukać</div>
<!-- task view -->
<svg style="left:407px;top:1171px" width="18" height="17" viewBox="0 0 18 17" fill="none" stroke="#fff" stroke-width="1.1"><path d="M0.5,0.5H11.5M0.5,16.5H11.5M2,3.5H10V13.5H2Z M15.5,0.5V2.5 M15.5,6V16.5"/><rect x="14" y="3" width="3" height="2.5" fill="#fff" stroke="none"/></svg>
<!-- explorer -->
<svg style="left:456px;top:1170px" width="23" height="19" viewBox="0 0 23 19"><path d="M0,1.5H8L9.5,3.5H22V6H0Z" fill="#e8b23a"/><path d="M0,5H22V18.5H0Z" fill="#f6cd5a"/><path d="M6,11.5H16V18.5H13.5V14H8.5V18.5H6Z" fill="#3b87d4"/><rect x="6" y="10.5" width="10" height="1.5" fill="#5aa3e6"/></svg>
<!-- edge -->
<svg style="left:504px;top:1168px" width="25" height="24" viewBox="0 0 25 24"><defs><linearGradient id="eg1" x1="0" y1="0" x2="1" y2="1"><stop offset="0" stop-color="#35c1f1"/><stop offset="0.6" stop-color="#34d07f"/><stop offset="1" stop-color="#66eb6e"/></linearGradient><linearGradient id="eg2" x1="0" y1="0" x2="0" y2="1"><stop offset="0" stop-color="#1b7fd6"/><stop offset="1" stop-color="#0c59a4"/></linearGradient></defs><circle cx="12.5" cy="12" r="12" fill="url(#eg2)"/><path d="M1,9C3,3 8,0 12.5,0C19,0 24.5,5 24.5,11C24.5,14.5 22,16 19,16C16,16 14,15 14,13C16,12 16.5,10 14,8C11,6 4,6.5 1,9Z" fill="url(#eg1)"/><path d="M7,14C7,18 10,21 14,21.5C10,23 5,21 3.5,17C2.5,14 4,10.5 7.5,9.5C8.5,9.2 11,9 12,10C8.5,10.5 7,12 7,14Z" fill="#0a4c8e"/></svg>
<div class="a" style="left:496px;top:1198px;width:40px;height:2px;background:#76b9ed"></div>
<!-- opera -->
<svg style="left:554px;top:1168.5px" width="23" height="23" viewBox="0 0 23 23"><ellipse cx="11.5" cy="11.5" rx="11" ry="11.2" fill="#e0162b"/><ellipse cx="11.5" cy="11.5" rx="4.5" ry="7.8" fill="#22353f"/></svg>
<!-- firefox -->
<svg style="left:602.5px;top:1167.5px" width="24" height="25" viewBox="0 0 24 25"><defs><linearGradient id="ff1" x1="0.1" y1="0.9" x2="0.9" y2="0.1"><stop offset="0" stop-color="#ff3a70"/><stop offset="0.45" stop-color="#ff5a2c"/><stop offset="0.75" stop-color="#ff9a1f"/><stop offset="1" stop-color="#ffe23c"/></linearGradient></defs><path d="M12,1C13.5,2.5 14,4 14,5C18,6 22,9.5 22.5,14.5C22.5,20 18,24.2 12,24.2C5.8,24.2 1.2,19.5 1.2,13.5C1.2,10 2.8,7.5 4,6.2C4.5,7.5 5.2,8.2 6,8.5C6.5,6.5 8,5 10,4.5C11.5,3.5 12,2 12,1Z" fill="url(#ff1)"/><path d="M14,5C18,6 22,9.5 22.5,14.5C22.5,17 21.5,19 20.5,20C21,14 18,9 13,8.5C14,7.5 14.3,6 14,5Z" fill="#ffd23a"/><ellipse cx="11" cy="14" rx="4.6" ry="4.4" fill="#8d4ff0"/><path d="M7,11C8,10 10,9.5 12,10C11,11 11,12 12,12.5C10,12.5 8,12 7,11Z" fill="#ff9a3c"/></svg>
<!-- chrome -->
<div class="a" style="left:639px;top:1160px;width:48px;height:40px;background:#3b4d59"></div>
<div class="a" style="left:639px;top:1198px;width:48px;height:2px;background:#76b9ed"></div>
<svg style="left:651.5px;top:1168.5px" width="23" height="23" viewBox="0 0 23 23"><circle cx="11.5" cy="11.5" r="11.3" fill="#db4437"/><path d="M11.5,11.5L1.7,5.85A11.3,11.3 0 0 0 11.5,22.8Z" fill="#0f9d58"/><path d="M11.5,11.5L11.5,22.8A11.3,11.3 0 0 0 21.3,5.85Z" fill="#ffcd40"/><path d="M11.5,11.5L1.7,5.85A11.3,11.3 0 0 1 21.3,5.85Z" fill="#db4437"/><circle cx="11.5" cy="11.5" r="5.3" fill="#fff"/><circle cx="11.5" cy="11.5" r="4.2" fill="#4285f4"/></svg>
<!-- tray -->
<svg style="left:1605px;top:1175px" width="17" height="10" viewBox="0 0 17 10"><path d="M3,10C1.3,10 0,8.8 0,7.3C0,5.8 1.2,4.7 2.6,4.6C3.2,2.2 5.2,0.5 7.7,0.5C9.8,0.5 11.6,1.8 12.3,3.7C12.6,3.6 13,3.6 13.3,3.6C15.3,3.6 17,5.2 17,7C17,8.7 15.6,10 13.8,10Z" fill="#3a8fe0"/></svg>
<svg style="left:1629px;top:1175px" width="17" height="10" viewBox="0 0 17 10"><path d="M3,10C1.3,10 0,8.8 0,7.3C0,5.8 1.2,4.7 2.6,4.6C3.2,2.2 5.2,0.5 7.7,0.5C9.8,0.5 11.6,1.8 12.3,3.7C12.6,3.6 13,3.6 13.3,3.6C15.3,3.6 17,5.2 17,7C17,8.7 15.6,10 13.8,10Z" fill="#3a8fe0"/></svg>
<svg style="left:1655px;top:1171px" width="13" height="18" viewBox="0 0 13 18"><ellipse cx="6.5" cy="9" rx="6.3" ry="8.8" fill="#1e7ee6"/><path d="M3.5,5.5L9.5,11.5L6.5,14.5V3.5L9.5,6.5L3.5,12.5" fill="none" stroke="#fff" stroke-width="1.1"/></svg>
<svg style="left:1677px;top:1171px" width="17" height="18" viewBox="0 0 17 18"><path d="M0.5,2.5L7,0.5L13.5,2.5V8C13.5,12 10.5,15 7,16.5C3.5,15 0.5,12 0.5,8Z" fill="#fff"/><path d="M7,0.5V16.5M0.5,7.5H13.5" stroke="#1d2c42" stroke-width="1.3"/><circle cx="12.5" cy="13.5" r="4.2" fill="#1e9e48"/><path d="M10.5,13.5L12,15L14.5,12" fill="none" stroke="#fff" stroke-width="1.1"/></svg>
<svg style="left:1700px;top:1173px" width="18" height="13" viewBox="0 0 18 13" fill="none" stroke="#fff" stroke-width="1.1"><path d="M2.5,0.5V3M5,0.5V3M1.2,3H6.3V5.5C6.3,6.5 5.5,7.3 3.75,7.3C2,7.3 1.2,6.5 1.2,5.5ZM3.75,7.3V12"/><rect x="7.5" y="4.5" width="9" height="6.5"/><rect x="8.5" y="5.5" width="7" height="4.5" fill="#fff"/><path d="M16.5,6.5H17.5V9H16.5"/></svg>
<svg style="left:1725px;top:1173px" width="17" height="14" viewBox="0 0 17 14" fill="none" stroke="#fff" stroke-width="1.1"><rect x="0.5" y="0.5" width="5" height="4"/><path d="M3,4.5V10.5M5.5,2.5H16.5V10.5H3M9.5,10.5V13M6.5,13.5H12.5"/></svg>
<svg style="left:1748px;top:1172px" width="18" height="16" viewBox="0 0 18 16" fill="none" stroke="#fff" stroke-width="1.1"><path d="M0.5,5.5H3.5L8,1.5V14.5L3.5,10.5H0.5Z M10.5,5.5C11.5,6.5 11.5,9.5 10.5,10.5 M12.8,3.5C14.6,5.5 14.6,10.5 12.8,12.5 M15,1.5C17.6,4.5 17.6,11.5 15,14.5"/></svg>
<svg style="left:1777px;top:1171px" width="17" height="18" viewBox="0 0 17 18" fill="none" stroke="#fff" stroke-width="1.1"><path d="M6,14L14.5,2.5C15,1.8 15.8,1.5 16,2C16.4,2.5 16.2,3.2 15.7,3.8L7.5,15L5.5,16Z M2.5,17.5C0.5,16 1,13 3,12.5M10.5,11C12,11 13,12 11.5,13"/></svg>
<div class="t" style="left:1808px;top:1160px;width:54px;text-align:center;font-size:11.3px;line-height:20px;color:#fff">18:59</div>
<div class="t" style="left:1806px;top:1178px;width:58px;text-align:center;font-size:11.3px;line-height:20px;color:#fff">15.11.2020</div>
<svg style="left:1879px;top:1172px" width="17" height="16" viewBox="0 0 17 16" fill="none" stroke="#fff" stroke-width="1.1"><path d="M0.5,0.5H16.5V12.5H11L8.5,15L6,12.5H0.5Z"/></svg>
<div class="a" style="left:1915px;top:1160px;width:1px;height:40px;background:#6b7a84"></div>

</body></html>
